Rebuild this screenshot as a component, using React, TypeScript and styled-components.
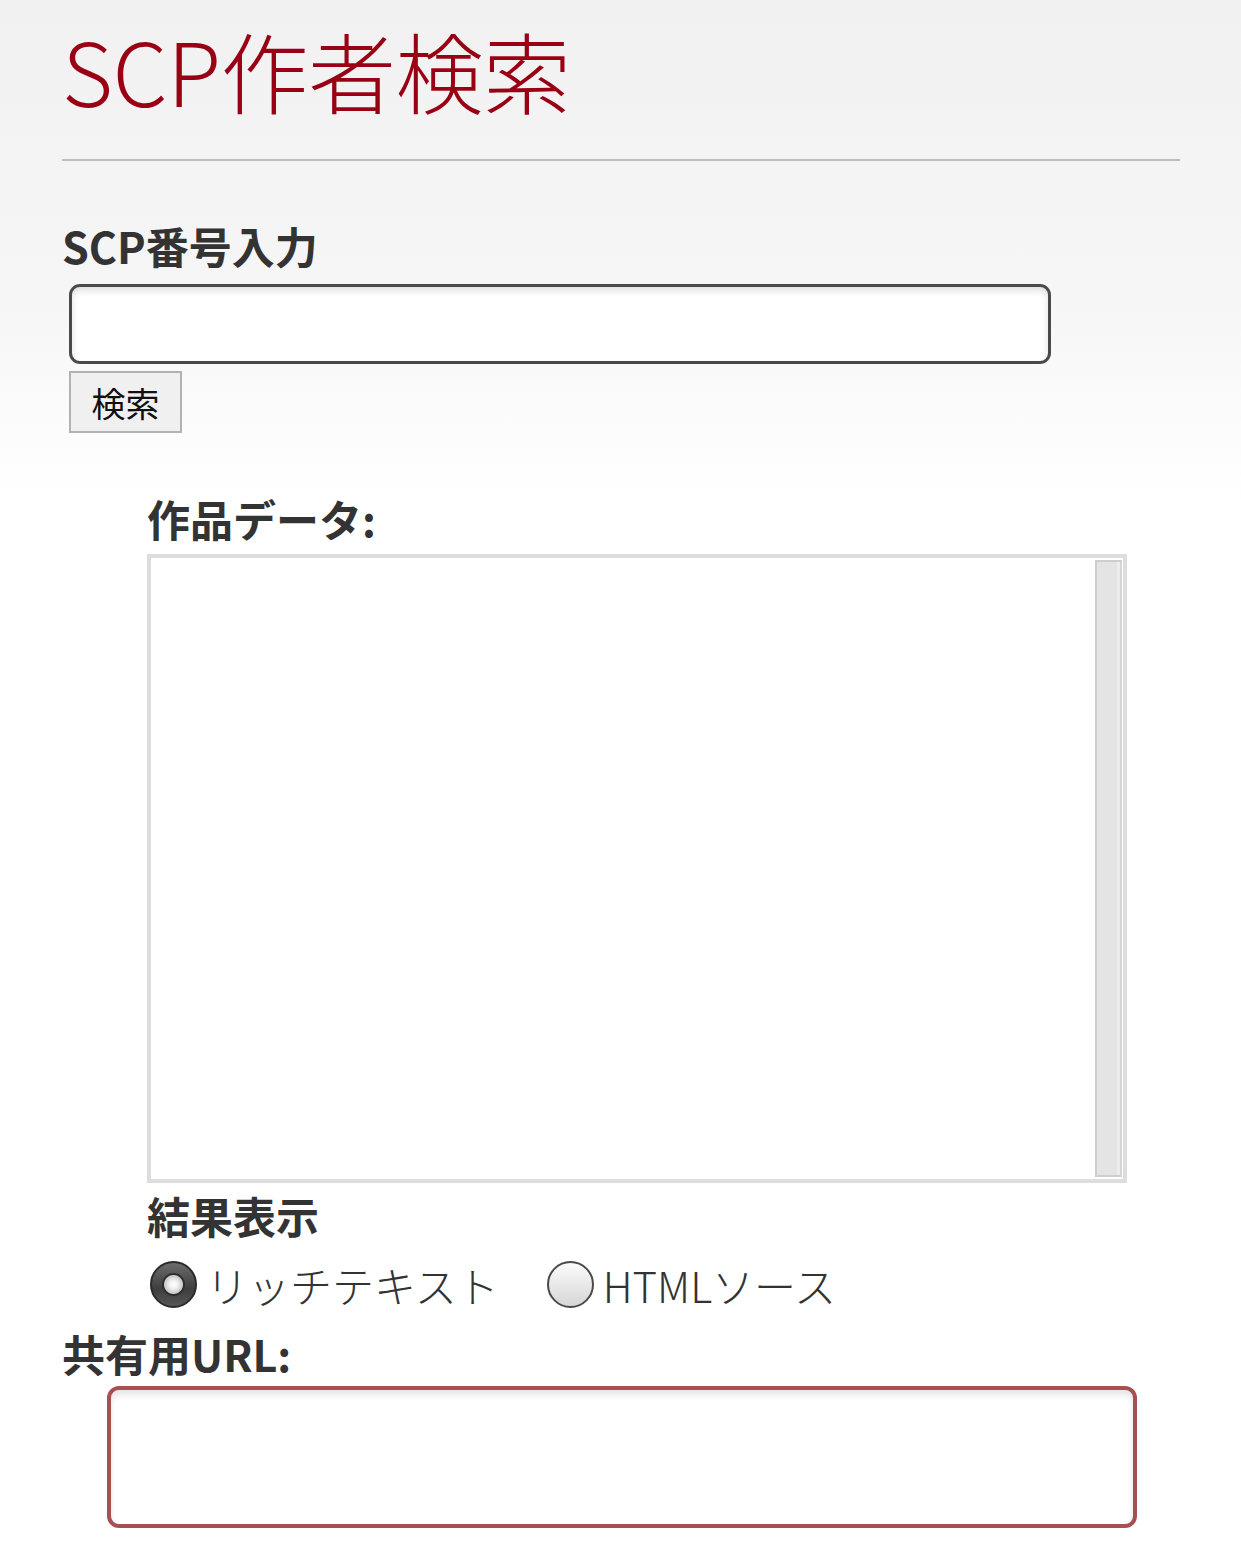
import React, {useState} from 'react';
import styled, {createGlobalStyle} from "styled-components";

const GlobalStyle = createGlobalStyle`
html, body {
  margin: 0;
  padding: 0;
}
body {
  background: #fff linear-gradient(to bottom, #f1f1f2 0, #f6f6f7 300px, #fff 500px) no-repeat;
  font-family: "Noto Sans CJK JP", "Noto Sans", sans-serif;
  color: #333;
}
`

const Page = styled.div`
min-height: 1559px;
padding: 0 61px 0 62px;
box-sizing: border-box;
`

const Title = styled.h1`
margin: 25px 0 0;
font-size: 88px;
line-height: 88px;
font-weight: 300;
color: #990014;
letter-spacing: -0.5px;
`

const Rule = styled.hr`
margin: 46px 0 0;
height: 2px;
border: 0;
background: #bcbcbc;
`

const Label = styled.h2<{$top: number; $indent?: number}>`
margin: ${p => p.$top}px 0 0 ${p => p.$indent || 0}px;
font-size: 43px;
line-height: 42px;
font-weight: 700;
color: #333;
`

const NumberInput = styled.input`
display: block;
box-sizing: border-box;
margin: 18px 0 0 7px;
width: 982px;
height: 80px;
border: 3px solid #4a4a4a;
border-radius: 11px;
background: #fff;
box-shadow: inset 0 4px 6px rgba(0, 0, 0, 0.12);
font-size: 32px;
padding: 0 12px;
outline: none;
`

const SearchButton = styled.button`
display: block;
margin: 7px 0 0 7px;
width: 113px;
height: 62px;
border: 2px solid #b2b2b2;
border-radius: 0;
background: #f0f0f0;
font-family: "Noto Sans CJK JP", sans-serif;
font-size: 34px;
color: #111;
padding: 0;
`

const ResultFrame = styled.div`
display: flex;
box-sizing: border-box;
margin: 15px 0 0 85px;
width: 980px;
height: 629px;
border: 4px solid #dddddd;
background: #fff;
`

const ResultArea = styled.textarea`
flex: 1;
border: 0;
margin: 0;
padding: 6px;
background: transparent;
resize: none;
outline: none;
font-size: 28px;
`

const ScrollTrack = styled.div`
width: 23px;
margin: 2px 1px 2px 0;
background: #e4e4e4;
border: 2px solid #cecece;
border-right-color: #d6d6d6;
box-shadow: inset -3px 0 0 #ececec;
`

const RadioRow = styled.div`
display: flex;
align-items: center;
margin: 25px 0 0 88px;
height: 46px;
`

const RadioOption = styled.label<{$gap?: number}>`
display: flex;
align-items: center;
gap: 9px;
margin-right: ${p => p.$gap || 0}px;
font-size: 42px;
font-weight: 300;
color: #333;
cursor: pointer;
`

const Radio = styled.input`
appearance: none;
-webkit-appearance: none;
margin: 0;
width: 47px;
height: 47px;
border-radius: 50%;
box-sizing: border-box;
border: 2px solid #4a4a4a;
background: linear-gradient(to bottom, #fbfbfb, #d6d6d6);

&:checked {
  border-color: #2a2a2a;
  background:
    radial-gradient(circle at 50% 50%, #ffffff 0, #f2f2f2 4px, #c8c8c8 9px, #2e2e2e 10px, #2e2e2e 11px, transparent 12px),
    linear-gradient(to bottom, #6c6c6c, #3e3e3e 60%, #555);
}
`

const UrlBox = styled.input`
display: block;
box-sizing: border-box;
margin: 12px 0 0 45px;
width: 1030px;
height: 142px;
border: 4px solid #a65052;
border-radius: 12px;
background: #fff;
box-shadow: inset 0 5px 6px rgba(0, 0, 0, 0.1);
font-size: 32px;
padding: 0 14px;
outline: none;
`

const App = () => {
    const [mode, setMode] = useState('rich');

    return (
        <Page>
            <GlobalStyle/>
            <Title>SCP作者検索</Title>
            <Rule/>
            <Label $top={63}>SCP番号入力</Label>
            <NumberInput type="text"/>
            <SearchButton type="button">検索</SearchButton>
            <Label $top={64} $indent={85}>作品データ:</Label>
            <ResultFrame>
                <ResultArea readOnly/>
                <ScrollTrack/>
            </ResultFrame>
            <Label $top={11} $indent={85}>結果表示</Label>
            <RadioRow>
                <RadioOption $gap={48}>
                    <Radio type="radio" name="mode" checked={mode === 'rich'} onChange={() => setMode('rich')}/>
                    リッチテキスト
                </RadioOption>
                <RadioOption>
                    <Radio type="radio" name="mode" checked={mode === 'html'} onChange={() => setMode('html')}/>
                    HTMLソース
                </RadioOption>
            </RadioRow>
            <Label $top={25}>共有用URL:</Label>
            <UrlBox type="text" readOnly/>
        </Page>
    )
}

export default App
